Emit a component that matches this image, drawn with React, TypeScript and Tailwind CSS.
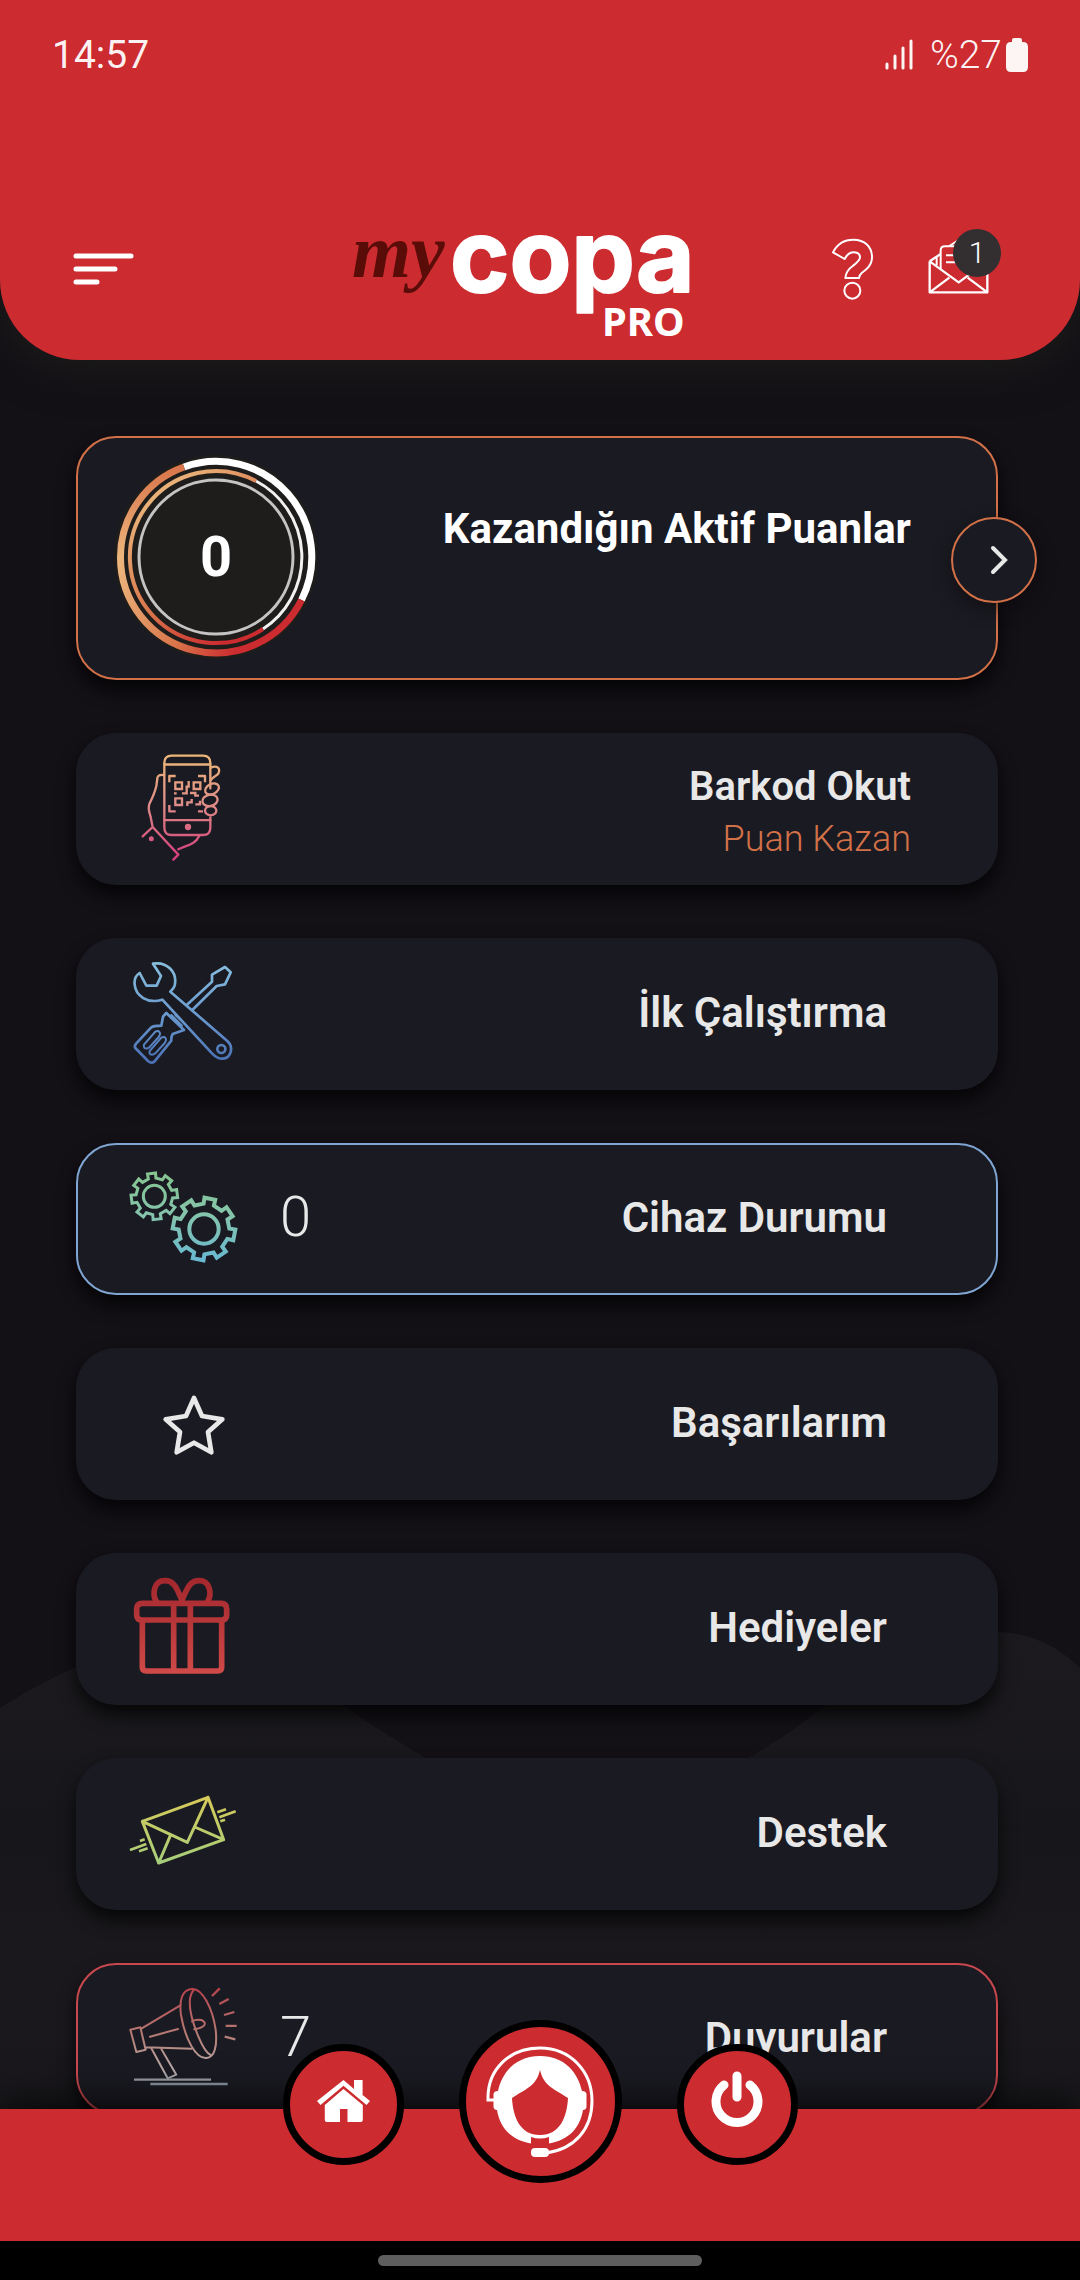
import React from 'react'

type MenuItem = {
  id: string
  title: string
  icon: React.ReactNode
  subtitle?: string
  count?: number
  border?: string
}

const iconProps = {
  className: 'size-[110px] shrink-0',
  fill: 'none',
  strokeLinecap: 'round' as const,
  strokeLinejoin: 'round' as const,
  'aria-hidden': true,
}

const gearPath = (cx: number, cy: number, root: number, outer: number, start: number) => {
  const teeth = 8
  const step = 360 / teeth
  const point = (radius: number, angle: number) => {
    const rad = (angle * Math.PI) / 180
    return `${(cx + radius * Math.cos(rad)).toFixed(1)} ${(cy + radius * Math.sin(rad)).toFixed(1)}`
  }

  return (
    Array.from({ length: teeth }, (_, i) => {
      const a = start + i * step
      return [
        point(root, a - 12),
        point(outer, a - 10),
        point(outer, a + 10),
        point(root, a + 12),
      ].join(' L')
    }).reduce((path, part) => (path ? `${path} L${part}` : `M${part}`), '') + ' Z'
  )
}

const BarcodeIcon = () => (
  <svg {...iconProps} viewBox="54 72 330 330" stroke="url(#barcode)" strokeWidth="7">
    <defs>
      <linearGradient id="barcode" gradientUnits="userSpaceOnUse" x1="0" y1="77" x2="0" y2="390">
        <stop offset="0" stopColor="#ebb678" />
        <stop offset="0.45" stopColor="#df8f88" />
        <stop offset="0.75" stopColor="#d8607f" />
        <stop offset="1" stopColor="#d63b80" />
      </linearGradient>
    </defs>
    <path d="M301 262V293Q301 315 279 315H185Q163 315 163 293V99Q163 77 185 77H279Q301 77 301 99V175" />
    <path d="M163 103.500H301M163 270.500H301" />
    <circle cx="234" cy="291" r="6" fill="#d8607f" />
    <path d="M302 113C322 105 332 114 325 131C321 138 308 139 302 151" />
    <ellipse cx="306" cy="177" rx="22" ry="15" transform="rotate(-27 306 177)" />
    <ellipse cx="300" cy="211" rx="23" ry="17" transform="rotate(-12 300 211)" />
    <ellipse cx="302" cy="242" rx="17" ry="14" />
    <path strokeLinecap="butt" d="M178 157V138H197M264 138H285V157M178 225V244H197M264 244H279" />
    <path strokeLinejoin="miter" d="M196 157H216V177H196ZM251 157H271V177H251ZM196 205H216V225H196Z" />
    <path strokeLinecap="butt" strokeLinejoin="miter" d="M236 153V170H230V190H216M192 190H200M240 189H256V197H267M245 207V217H232V228M256 223H270V212" />
    <path d="M162 135Q142 132 142 146L139 168Q134 190 118 222C112 240 121 252 123 266L128 291M98 319L128 291L205 374L190 389M268 317C255 345 230 345 205 358" />
    <circle cx="124" cy="326" r="4" fill="#d8607f" />
  </svg>
)

const ToolsIcon = () => (
  <svg {...iconProps} viewBox="54 57 330 330" stroke="url(#tools)" strokeWidth="8">
    <defs>
      <linearGradient id="tools" gradientUnits="userSpaceOnUse" x1="0" y1="70" x2="0" y2="370">
        <stop offset="0" stopColor="#86bddb" />
        <stop offset="0.5" stopColor="#6b9bd0" />
        <stop offset="1" stopColor="#4a70b4" />
      </linearGradient>
    </defs>
    <path d="M129 71C170 64 203 95 194 137C191 146 185 150 181 155L351 302C373 321 363 354 338 356C326 357 316 350 306 340L157 179C112 193 77 167 74 134C72 117 78 106 89 99L109 137H140L153 108Z" />
    <circle cx="334" cy="327" r="12" />
    <path d="M231 194L306 125V104L345 81L362 97L345 133L320 138L247 210" />
    <path d="M169 219L222 270L190 281Q183 286 184 302L133 365Q124 372 114 363L76 324Q72 318 79 310L123 263Q130 257 154 257L159 230Z" />
    <path strokeWidth="6" d="M184 225L216 257M196 225L213 241" />
    <path strokeWidth="6" d="M102 314L136 275Q146 269 150 279Q151 285 146 291L118 322Q109 328 103 323Q100 319 102 314ZM119 333L154 293Q164 287 168 297Q169 303 164 309L136 340Q127 347 120 342Q117 338 119 333Z" />
  </svg>
)

const GearsIcon = () => (
  <svg {...iconProps} viewBox="54 42 330 330" stroke="url(#gears)" strokeLinejoin="miter">
    <defs>
      <linearGradient id="gears" gradientUnits="userSpaceOnUse" x1="0" y1="65" x2="0" y2="335">
        <stop offset="0" stopColor="#86c58e" />
        <stop offset="0.5" stopColor="#84c4ad" />
        <stop offset="1" stopColor="#68b8d2" />
      </linearGradient>
    </defs>
    <path d={gearPath(133, 139, 55, 70, -97)} strokeWidth="9" />
    <circle cx="133" cy="139" r="33" strokeWidth="9" />
    <path d={gearPath(282, 237, 76, 94, -79)} strokeWidth="12" />
    <circle cx="282" cy="237" r="44" strokeWidth="12" />
  </svg>
)

const StarIcon = () => (
  <svg {...iconProps} viewBox="54 27 330 330" stroke="#e8e8e8" strokeWidth="14">
    <path d="M252 114L276 168L337 178L294 216L304 277L252 248L200 277L210 216L167 178L228 168Z" />
  </svg>
)

const GiftIcon = () => (
  <svg {...iconProps} viewBox="54 642 330 330" stroke="url(#gift)" strokeWidth="17">
    <defs>
      <linearGradient id="gift" gradientUnits="userSpaceOnUse" x1="0" y1="654" x2="0" y2="942">
        <stop offset="0" stopColor="#a3272d" />
        <stop offset="1" stopColor="#cf4a48" />
      </linearGradient>
    </defs>
    <path d="M97 730H333Q350 730 350 747V764Q350 780 333 780H97Q80 780 80 764V747Q80 730 97 730Z" />
    <path d="M97 784V922Q97 933 109 933H323Q335 933 335 922V784M191 732V930M241 732V930" />
    <path d="M140 726C124 700 133 662 165 662C196 662 203 694 216 720C229 694 236 662 267 662C299 662 308 700 292 726" />
  </svg>
)

const SupportMailIcon = () => (
  <svg {...iconProps} viewBox="54 27 330 330" stroke="url(#mail)" strokeWidth="9">
    <defs>
      <linearGradient id="mail" gradientUnits="userSpaceOnUse" x1="0" y1="78" x2="0" y2="284">
        <stop offset="0" stopColor="#d8cb58" />
        <stop offset="1" stopColor="#a4cd7c" />
      </linearGradient>
    </defs>
    <path d="M97 154L294 82L341 209L146 279ZM97 154L232 217L294 82M181 197L146 279M254 171L341 209" />
    <path strokeLinecap="butt" d="M322 127L348 118M328 142L377 124M331 154L345 149M90 213L104 208M60 240L109 222M87 244L113 235" strokeWidth="8" />
  </svg>
)

const MegaphoneIcon = () => (
  <svg {...iconProps} viewBox="54 642 330 330" stroke="url(#mega)" strokeWidth="6">
    <defs>
      <linearGradient id="mega" gradientUnits="userSpaceOnUse" x1="0" y1="655" x2="0" y2="945">
        <stop offset="0" stopColor="#b8434d" />
        <stop offset="0.5" stopColor="#b57e76" />
        <stop offset="0.85" stopColor="#b7aaa9" />
        <stop offset="1" stopColor="#8694a0" />
      </linearGradient>
    </defs>
    <path d="M61 779L91 772L107 839L79 846ZM94 776L211 706M107 832L245 836M120 800L204 777" />
    <path d="M245 657C277 653 308 717 317 779C322 826 315 863 289 864C257 867 225 805 213 735C207 690 216 660 245 657Z" />
    <path d="M251 660C226 689 245 750 264 797C277 829 290 850 302 855" />
    <path d="M246 754Q258 747 274 750Q290 757 282 767Q274 775 253 778" />
    <path d="M124 835L173 925L199 914L154 837" />
    <path strokeWidth="7" strokeLinecap="butt" d="M306 678L329 655M328 702L356 687M342 735L373 726M347 767.500H380M344 800L376 808" />
    <path strokeWidth="7" strokeLinecap="butt" d="M72 929H303M121 942H353" />
  </svg>
)

const menuItems: MenuItem[] = [
  { id: 'barcode', title: 'Barkod Okut', subtitle: 'Puan Kazan', icon: <BarcodeIcon /> },
  { id: 'setup', title: 'İlk Çalıştırma', icon: <ToolsIcon /> },
  { id: 'devices', title: 'Cihaz Durumu', count: 0, border: 'border-[#7fa6d3]', icon: <GearsIcon /> },
  { id: 'badges', title: 'Başarılarım', icon: <StarIcon /> },
  { id: 'gifts', title: 'Hediyeler', icon: <GiftIcon /> },
  { id: 'support', title: 'Destek', icon: <SupportMailIcon /> },
  { id: 'news', title: 'Duyurular', count: 7, border: 'border-[#c9484f]', icon: <MegaphoneIcon /> },
]

const StatusBar = () => (
  <div className="flex h-[110px] items-center justify-between px-[52px] text-[39px] leading-none text-white/95">
    <span>14:57</span>
    <div className="flex items-center">
      <svg width="30" height="32" viewBox="0 0 30 32" stroke="currentColor" strokeWidth="3" strokeLinecap="round" aria-hidden="true">
        <path d="M3 25V29M11 17V29M19 9V29M27 2V29" />
      </svg>
      <span className="ml-4 font-light">%27</span>
      <svg className="ml-1" width="22" height="34" viewBox="0 0 22 34" fill="currentColor" aria-hidden="true">
        <path d="M6 2Q6 0 8 0H14Q16 0 16 2V4H17Q22 4 22 9V29Q22 34 17 34H5Q0 34 0 29V9Q0 4 5 4H6Z" />
      </svg>
    </div>
  </div>
)

const Logo = () => (
  <svg className="overflow-visible" width="370" height="140" viewBox="0 0 370 140" role="img" aria-label="mycopa PRO">
    <text x="0" y="78" fill="#5a0d08" fontSize="76" fontWeight="700" fontStyle="italic" fontFamily="Liberation Serif, serif">
      my
    </text>
    <text x="98" y="93" fill="#fff" stroke="#fff" strokeWidth="2" strokeLinejoin="round" fontSize="101" fontWeight="700" fontFamily="Inter, sans-serif">
      copa
    </text>
    <text x="250" y="137" fill="#fff" fontSize="40" fontWeight="700" fontFamily="Noto Sans, sans-serif">
      PRO
    </text>
  </svg>
)

const Header = () => (
  <header className="relative z-10 shrink-0 rounded-b-[80px] bg-[#cc2b30] pb-[21px] shadow-[0_8px_44px_rgba(30,30,26,0.9)]">
    <StatusBar />

    <div className="mt-[89px] grid grid-cols-[1fr_auto_1fr] items-center pl-[73px] pr-[79px]">
      <button type="button" aria-label="Menü" className="justify-self-start">
        <svg width="61" height="32" viewBox="0 0 61 32" stroke="#fff" strokeWidth="5" strokeLinecap="round" aria-hidden="true">
          <path d="M3 3H58M3 16H42M3 29H24" />
        </svg>
      </button>

      <Logo />

      <div className="flex items-center gap-[52px] justify-self-end">
        <button type="button" aria-label="Yardım">
          <svg width="46" height="64" viewBox="150 81 138 192" fill="none" stroke="#fff" strokeWidth="6" strokeLinejoin="round" aria-hidden="true">
            <path d="M159 127C172 101 192 89 220 89C254 89 276 110 276 141C276 166 259 179 245 189C239 194 238 197 237 204H196C198 186 205 177 218 168C230 159 240 152 240 142C240 131 231 127 220 127C209 127 200 135 194 147Z" />
            <circle cx="217" cy="242" r="24" />
          </svg>
        </button>

        <button type="button" aria-label="Mesajlar, 1 okunmamış" className="relative">
          <svg width="73" height="80" viewBox="444 57 219 240" fill="none" stroke="#fff" strokeWidth="7" strokeLinejoin="round" aria-hidden="true">
            <path d="M449 154V247H622V150L600 132M449 154L482 132M449 154L536 217L622 154M449 247L508 203M622 247L563 203" />
            <path strokeWidth="6" d="M482 178V122Q482 109 495 109H585M508 108L536 90M498 136H540M498 157H540M470 142V166" />
          </svg>
          <span className="absolute right-0 top-0 flex size-12 items-center justify-center rounded-full bg-[#332f30] text-[30px] font-light leading-none text-white">
            1
          </span>
        </button>
      </div>
    </div>
  </header>
)

const ScoreRing = ({ value }: { value: number }) => (
  <div className="relative flex size-[204px] shrink-0 items-center justify-center">
    <svg className="absolute inset-0" viewBox="-102 -102 204 204" fill="none" aria-hidden="true">
      <defs>
        <linearGradient id="ringTop" gradientUnits="userSpaceOnUse" x1="0" y1="-92" x2="0" y2="0">
          <stop offset="0" stopColor="#d9744a" />
          <stop offset="1" stopColor="#ecb67d" />
        </linearGradient>
        <linearGradient id="ringBottom" gradientUnits="userSpaceOnUse" x1="-95" y1="0" x2="60" y2="60">
          <stop offset="0" stopColor="#ecb67d" />
          <stop offset="0.5" stopColor="#d9744a" />
          <stop offset="0.85" stopColor="#cc2b30" />
        </linearGradient>
        <linearGradient id="ringInner" gradientUnits="userSpaceOnUse" x1="-60" y1="-60" x2="50" y2="72">
          <stop offset="0" stopColor="#e9b077" />
          <stop offset="0.5" stopColor="#d9744a" />
          <stop offset="0.9" stopColor="#cc2b30" />
        </linearGradient>
      </defs>
      <circle r="102" fill="#1e1d1b" />
      <path d="M-32 -90A95.500 95.500 0 0 1 85.500 43" stroke="#fff" strokeWidth="7" />
      <path d="M-95.500 0A95.500 95.500 0 0 1 -32 -90" stroke="url(#ringTop)" strokeWidth="7" />
      <path d="M85.500 43A95.500 95.500 0 0 1 -95.500 0" stroke="url(#ringBottom)" strokeWidth="7" />
      <path d="M40 -76A86 86 0 0 1 47 72" stroke="#f1f1f1" strokeWidth="3" />
      <path d="M47 72A86 86 0 1 1 40 -76" stroke="url(#ringInner)" strokeWidth="4" />
      <circle r="77" stroke="#c4c4c4" strokeWidth="3" />
    </svg>
    <span className="relative text-[56px] font-bold leading-none text-white">{value}</span>
  </div>
)

const ScoreCard = () => (
  <section className="relative flex h-[244px] shrink-0 justify-between rounded-[40px] border-2 border-[#d27148] bg-[#1a1a22] pl-9 pr-[85px] pt-[17px] shadow-[0_10px_18px_rgba(0,0,0,0.75)]">
    <ScoreRing value={0} />
    <h2 className="mt-[50px] text-[42px] font-bold leading-[48px] text-white">Kazandığın Aktif Puanlar</h2>

    <button
      type="button"
      aria-label="Puan detayı"
      className="absolute -right-[41px] top-[79px] flex size-[86px] items-center justify-center rounded-full border-2 border-[#d27148] bg-[#1a1a22] shadow-[0_6px_18px_rgba(10,10,10,0.6)]"
    >
      <svg className="ml-3" width="20" height="30" viewBox="0 0 20 30" fill="none" stroke="#e8e8e8" strokeWidth="4" strokeLinecap="round" aria-hidden="true">
        <path d="M3 3L15 15L3 27" />
      </svg>
    </button>
  </section>
)

const MenuCard = ({ item }: { item: MenuItem }) => (
  <button
    type="button"
    className={`flex h-[152px] shrink-0 items-center rounded-[40px] border-2 bg-[#1a1a22] pl-[50px] text-[#e8e8e8] shadow-[0_10px_18px_rgba(0,0,0,0.75)] ${
      item.border ?? 'border-[#1a1a22]'
    } ${item.subtitle ? 'pr-[85px]' : 'pr-[109px]'}`}
  >
    {item.icon}
    {item.count !== undefined && (
      <span className="ml-[42px] pb-1 text-[56px] font-light leading-none">{item.count}</span>
    )}
    {item.subtitle ? (
      <span className="ml-auto flex flex-col pt-2 text-right leading-[52px]">
        <span className="text-[40px] font-semibold">{item.title}</span>
        <span className="text-[36px] font-light text-[#d27148]">{item.subtitle}</span>
      </span>
    ) : (
      <span className="ml-auto pb-0.5 text-right text-[42px] font-semibold leading-[52px]">{item.title}</span>
    )}
  </button>
)

const HomeIcon = () => (
  <svg width="53" height="42" viewBox="0 0 53 42" fill="#fff" aria-hidden="true">
    <path d="M26.500 0L37 9V0H45.600V15L53 21L49.500 25L26.500 5.700L3.500 25L0 21Z" />
    <path d="M26.500 9L45.800 25V40Q45.800 42 43.800 42H30.500V29H23V42H9.800Q7.800 42 7.800 40V25Z" />
  </svg>
)

const OperatorIcon = () => (
  <svg width="108" height="112" viewBox="0 0 108 112" aria-hidden="true">
    <path d="M9 54H2C1 23 24 2 54 2S106 25 106 55C106 83 89 103 60 107" fill="none" stroke="#fff" strokeWidth="3" />
    <rect x="45" y="102" width="18" height="9" rx="4" fill="#fff" />
    <path
      fill="#fff"
      fillRule="evenodd"
      d="M54 10C79 10 92 27 96 45Q100 45 100.500 48V61Q100 64 97 64C94 82 83 94 63 97.500V91Q54 94 45 91V97.500C25 94 14 82 11 64Q8 64 7.500 61V48Q8 45 12 45C16 27 29 10 54 10ZM54 24C50 41 39 43 26 52C27 71 34 89 54 89S81 71 82 52C69 43 58 41 54 24Z"
    />
  </svg>
)

const PowerIcon = () => (
  <svg width="52" height="56" viewBox="0 0 52 56" fill="none" stroke="#fff" strokeWidth="9" strokeLinecap="round" aria-hidden="true">
    <path d="M26 5V26M13 14A21 21 0 1 0 39 14" />
  </svg>
)

const BottomNav = () => (
  <nav className="relative z-10 shrink-0 bg-[#cc2b30] shadow-[0_-6px_36px_rgba(0,0,0,0.8)]">
    <div className="-mt-[89px] flex h-[221px] items-start justify-center gap-[55px]">
      <button type="button" aria-label="Ana sayfa" className="mt-6 flex size-[121px] items-center justify-center rounded-full border-[7px] border-black bg-[#cc2b30] pb-2">
        <HomeIcon />
      </button>
      <button type="button" aria-label="Canlı destek" className="flex size-[163px] items-center justify-center rounded-full border-[7px] border-black bg-[#cc2b30]">
        <OperatorIcon />
      </button>
      <button type="button" aria-label="Çıkış" className="mt-6 flex size-[121px] items-center justify-center rounded-full border-[7px] border-black bg-[#cc2b30] pb-3">
        <PowerIcon />
      </button>
    </div>
    <div className="flex h-[39px] justify-center bg-black pt-[14px]">
      <div className="h-[11px] w-[324px] rounded-full bg-[#5e5e5e]" />
    </div>
  </nav>
)

const Waves = () => (
  <svg className="absolute inset-x-0 bottom-0 h-[648px] w-full" viewBox="0 0 1080 648" preserveAspectRatio="none" aria-hidden="true">
    <defs>
      <linearGradient id="wave" x1="0" y1="0" x2="0" y2="1">
        <stop offset="0" stopColor="#1c1a1e" />
        <stop offset="0.3" stopColor="#17161a" />
        <stop offset="0.5" stopColor="#1a181c" />
        <stop offset="1" stopColor="#18171b" />
      </linearGradient>
    </defs>
    <path fill="url(#wave)" d="M0 76C60 38 120 12 180 12C250 12 300 44 345 75Q400 112 430 128C500 165 670 165 745 128Q790 102 825 74C890 25 945 0 1000 0Q1045 2 1080 36V648H0Z" />
  </svg>
)

const App: React.FC = () => {
  return (
    <div className="relative flex h-screen flex-col overflow-hidden bg-[#131016] font-[Roboto,sans-serif]">
      <Waves />
      <Header />

      <main className="relative flex min-h-0 flex-1 flex-col gap-[53px] overflow-x-hidden overflow-y-auto pl-[76px] pr-[82px] pt-[76px] [scrollbar-width:none]">
        <ScoreCard />
        {menuItems.map((item) => (
          <MenuCard key={item.id} item={item} />
        ))}
      </main>

      <BottomNav />
    </div>
  )
}

export default App
